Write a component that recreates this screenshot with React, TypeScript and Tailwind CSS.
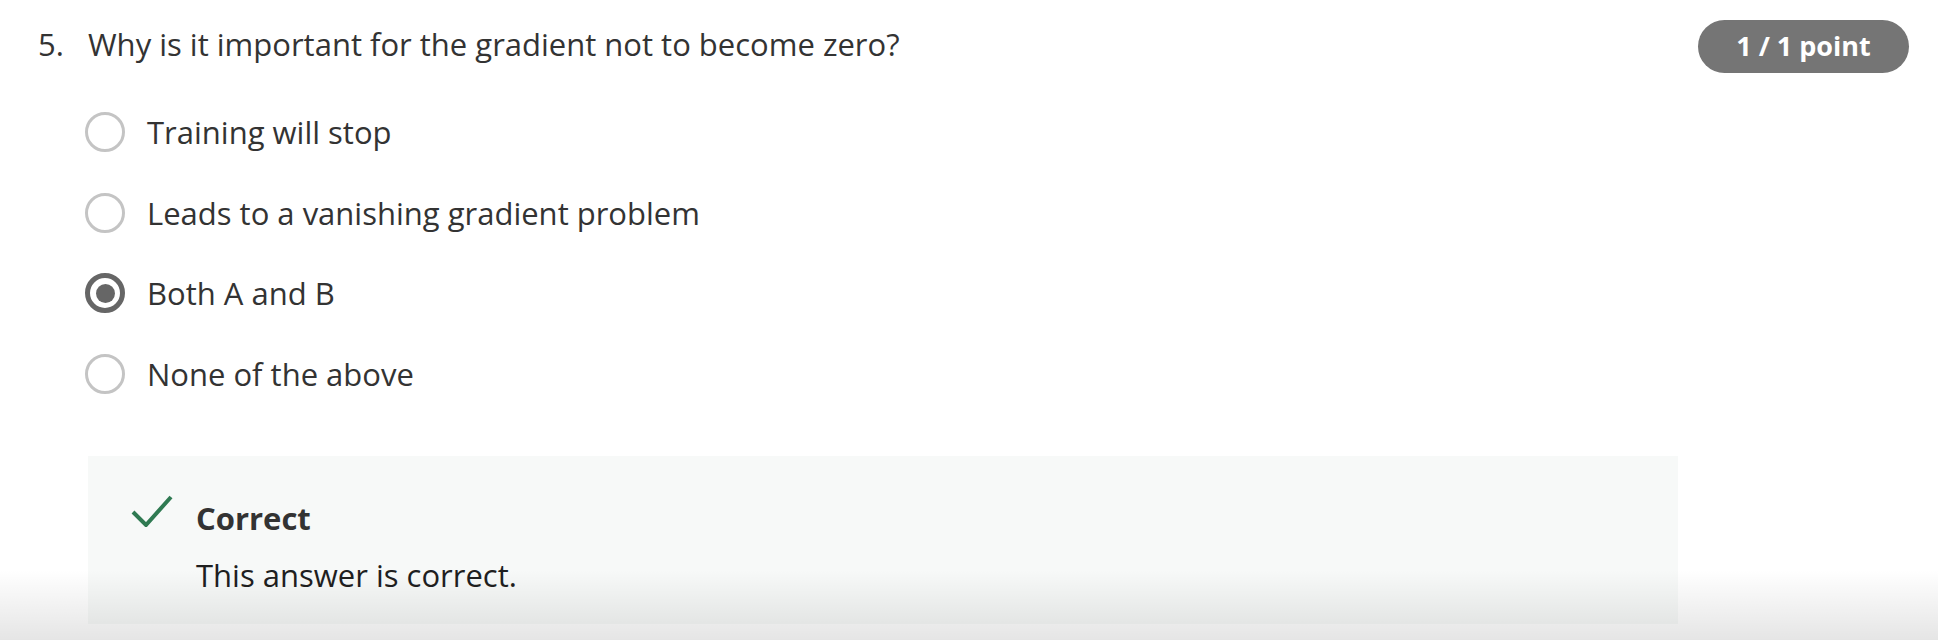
import React from "react";

const options = [
  { label: "Training will stop", selected: false },
  { label: "Leads to a vanishing gradient problem", selected: false },
  { label: "Both A and B", selected: true },
  { label: "None of the above", selected: false },
];

function Radio({ selected }: { selected: boolean }) {
  if (selected) {
    return (
      <span className="flex h-[40px] w-[40px] shrink-0 items-center justify-center rounded-full border-[5px] border-[#666666]">
        <span className="h-[19px] w-[19px] rounded-full bg-[#666666]" />
      </span>
    );
  }
  return <span className="h-[40px] w-[40px] shrink-0 rounded-full border-[3.5px] border-[#c4c4c4]" />;
}

export default function App() {
  return (
    <div
      className="relative h-[640px] w-full overflow-hidden bg-white text-[#333333]"
      style={{ fontFamily: '"Open Sans", "Liberation Sans", sans-serif' }}
    >
      {/* Question header */}
      <div className="mt-[20px] flex h-[53px] items-center justify-between pl-[38px] pr-[29px]">
        <div className="-mt-[6px] flex items-center text-[31px] leading-[42px]">
          <span className="w-[50px]">5.</span>
          <span>Why is it important for the gradient not to become zero?</span>
        </div>
        <div className="flex h-[53px] w-[211px] items-center justify-center rounded-full bg-[#757575] text-[27px] font-bold text-white">
          1 / 1 point
        </div>
      </div>

      {/* Options */}
      <div className="mt-[19px] flex flex-col pl-[85px]">
        {options.map((o) => (
          <div key={o.label} className="flex h-[80.5px] items-center gap-[22px]">
            <Radio selected={o.selected} />
            <span className="text-[31px] leading-[42px]">{o.label}</span>
          </div>
        ))}
      </div>

      {/* Feedback */}
      <div className="ml-[88px] mt-[42px] h-[168px] w-[1590px] bg-[#f7f9f8]">
        <div className="flex gap-[23px] pl-[43px] pt-[41px]">
          <svg width="42" height="32" viewBox="0 0 42 32" fill="none" className="-mt-[2px] shrink-0">
            <path d="M2 17 L15 30 L40 2" stroke="#2f7a52" strokeWidth="4" />
          </svg>
          <div className="flex flex-col">
            <span className="text-[31px] font-bold leading-[42px] text-[#333333]">Correct</span>
            <span className="mt-[15px] text-[31px] leading-[42px] text-[#1f1f1f]">This answer is correct.</span>
          </div>
        </div>
      </div>

      {/* bottom fade */}
      <div className="pointer-events-none absolute bottom-0 left-0 h-[70px] w-full bg-gradient-to-b from-transparent to-[rgba(0,0,0,0.1)]" />
    </div>
  );
}
